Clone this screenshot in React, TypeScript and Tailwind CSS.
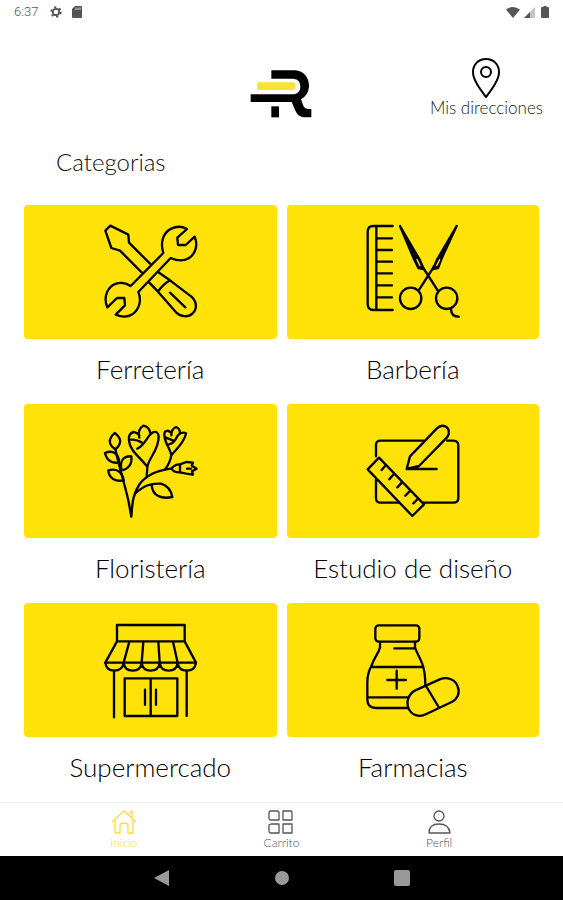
import type { ReactNode } from "react";

const categories: { name: string; viewBox: string; icon: ReactNode }[] = [
  {
    name: "Ferretería",
    viewBox: "0 6 360 360",
    icon: (
      <>
        {/* screwdriver */}
        <path d="M180 161 L117 98 L115 74 L61 47 L46 62 L64 114 L90 122 L155 187" />
        <path d="M205 187 L240 211 L304 260 C322 276 321 298 308 310 C294 323 273 321 258 307 L204 245 L177 217 M240 211 Q218 224 204 245 M240 248 L286 292" />
        {/* wrench */}
        <path d="M122 228 L220 129 C210 98 219 68 244 56 C260 48 278 50 291 57 L262 83 L264 105 L287 105 L314 80 C325 105 316 133 296 145 C279 155 258 151 242 144 L145 246 C156 273 147 299 127 313 C112 323 91 320 77 314 L105 286 L103 264 L81 264 L52 292 C41 267 48 239 69 225 C86 215 107 218 122 228 Z" />
      </>
    ),
  },
  {
    name: "Barbería",
    viewBox: "9 6 360 360",
    icon: (
      <>
        <path d="M128 48 H70 Q53 48 53 66 V282 Q53 300 70 300 H128 M79 48 V300 M79 85 H126 M79 120 H126 M79 155 H126 M79 190 H126 M79 226 H126 M79 262 H126" />
        {/* scissor blades, each with a thin slit */}
        <path d="M150 48 L209 149 L221 177 L205 174 L190 143 Z M320 48 L276 143 L264 174 L249 177 L261 149 Z" fill="currentColor" />
        <path d="M201 149 L210 167 M269 149 L260 167" stroke="#ffe207" strokeWidth="4" />
        <path d="M216 168 L263 241 M253 168 L206 241" />
        <circle cx="182" cy="265" r="32" />
        <circle cx="290" cy="265" r="32" />
        <path d="M303 298 Q304 320 326 320" />
      </>
    ),
  },
  {
    name: "Floristería",
    viewBox: "0 3 360 360",
    icon: (
      <>
        {/* leafy twig */}
        <path d="M76 117 C88 175 104 220 116 276 L124 320 C127 280 128 252 149 222 C170 194 204 181 244 176" />
        <path d="M74 69 C54 87 55 105 76 118 C96 102 95 84 74 69 Z M87 157 C72 161 51 156 45 129 C70 118 87 133 87 157 Z M95 181 C87 153 101 137 124 139 C127 162 115 178 95 181 Z M101 211 C76 216 57 205 55 181 C80 174 97 185 101 211 Z" />
        {/* large tulip */}
        <path d="M172 171 C157 147 119 124 117 92 C115 79 120 69 131 66 Q141 67 148 76 M172 171 C176 143 208 119 206 78 C204 68 199 63 189 67 C171 77 168 103 142 116 M123 89 Q139 87 158 99 M148 83 C144 67 148 54 160 47 Q178 50 181 70 M172 171 L170 202" />
        {/* small tulip */}
        <path d="M244 136 C241 114 222 99 223 71 C225 60 235 60 243 68 M244 136 C259 117 283 98 288 70 C279 65 267 69 261 80 C255 94 250 100 237 103 M228 83 L250 92 M244 76 Q244 57 258 51 Q269 55 270 68 M244 136 Q240 159 225 178" />
        {/* bud and lower leaf */}
        <path d="M244 176 Q255 162 270 163 L289 156 L309 158 L305 167 L320 176 L306 184 L309 194 L289 191 L270 187 Q252 188 244 176 M270 163 V187 M303 176 H291 M135 251 C161 228 180 219 213 221 C230 226 243 241 247 261 C216 268 188 259 185 226" />
      </>
    ),
  },
  {
    name: "Estudio de diseño",
    viewBox: "9 3 360 360",
    icon: (
      <>
        <path d="M78 139 V105 Q78 92 92 92 H221 M292 92 H310 Q325 92 325 107 V264 Q325 278 310 278 H220 M147 278 H91 Q78 278 78 264 V208" />
        <path d="M170 177 L180 139 L260 56 Q272 43 286 49 Q299 56 296 73 L291 82 L207 168 Z M170 177 H260" />
        <path d="M53 178 L87 143 L222 283 L187 318 Z M107 166 L95 180 M132 192 L118 208 M156 217 L142 232 M181 242 L166 257 M203 267 L190 280" />
      </>
    ),
  },
  {
    name: "Supermercado",
    viewBox: "0 0 360 360",
    icon: (
      <>
        <path d="M81 45 H284 V94 H81 Z M81 94 L46 158 H318 L284 94 M118 95 L101 158 M160 95 L155 158 M205 95 L209 158 M249 95 L263 158" />
        <path d="M46 158 Q49 182 73 182 Q97 182 101 158 Q104 182 128 182 Q152 182 155 158 Q158 182 182 182 Q206 182 209 158 Q212 182 236 182 Q260 182 263 158 Q266 182 290 182 Q315 182 318 158" />
        <path d="M72 182 V322 M290 182 V318 M104 205 H262 V318 H104 Z M182 205 V318 M165 239 V284 M198 239 V284" />
      </>
    ),
  },
  {
    name: "Farmacias",
    viewBox: "9 0 360 360",
    icon: (
      <>
        <rect x="76" y="46" width="132" height="49" rx="10" />
        <path d="M90 96 V113 C85 131 72 143 65 166 Q52 191 52 216 V268 Q52 294 78 294 H173 M195 96 V112 C201 132 211 142 219 168 Q226 191 226 228 M194 115 H133 M64 171 H220 M53 262 H174 M112 210 H168 M140 182 V236" />
        <path d="M196 241 L269 208 C293 199 316 209 323 229 C331 249 322 268 305 276 L229 312 C207 324 184 315 176 296 C167 275 176 251 196 241 Z M228 228 L267 293" />
      </>
    ),
  },
];

const tabs = [
  {
    name: "Inicio",
    color: "text-[#f9dd3a]",
    icon: <path d="M1 13 L13 2 L25 13 M4 11 V24 H9 V17 Q9 14 13 14 Q17 14 17 17 V24 H22 V11 M18 5 L21 2 V9" />,
  },
  {
    name: "Carrito",
    color: "text-[#555]",
    icon: <path d="M3 2 H9 Q11 2 11 4 V11 H3 Q1 11 1 9 V4 Q1 2 3 2 Z M15 2 H23 Q24 2 24 3 V11 H15 Z M3 15 H11 V24 H3 Q1 24 1 22 V16 Z M15 15 H24 V24 H15 Z" />,
  },
  {
    name: "Perfil",
    color: "text-[#555]",
    icon: (
      <>
        <circle cx="13" cy="7" r="5" />
        <path d="M3 24 Q3 15 13 15 Q23 15 24 24 Z" />
      </>
    ),
  },
];

function StatusBar() {
  return (
    <div className="flex h-6 items-center justify-between px-3.5 text-[#555]">
      <div className="flex items-center gap-3">
        <span className="font-[Roboto,sans-serif] text-[13px]">6:37</span>
        <svg viewBox="0 0 12 12" className="size-3" fill="none" stroke="currentColor">
          <circle cx="6" cy="6" r="3.2" strokeWidth="1.8" />
          <circle cx="6" cy="6" r="4.8" strokeWidth="1.8" strokeDasharray="2.2 2.83" />
        </svg>
        <svg viewBox="0 0 10 12" className="-ml-0.5 h-3 w-2.5" fill="currentColor">
          <path d="M3 0 H9 Q10 0 10 1 V11 Q10 12 9 12 H1 Q0 12 0 11 V3 Z" />
          <path d="M4 1.5 V4 M6 1.5 V4 M8 1.5 V4" stroke="white" strokeWidth="0.7" />
        </svg>
      </div>
      <div className="flex items-center gap-1">
        <svg viewBox="0 0 14 11" className="h-[11px] w-3.5" fill="currentColor">
          <path d="M7 11 L0 2.5 Q7 -2.5 14 2.5 Z" />
        </svg>
        <svg viewBox="0 0 11 11" className="size-[11px]">
          <path d="M11 0 V11 H0 Z" fill="#c4c4c4" />
          <path d="M6 5 V11 H0 Z" fill="#555" />
        </svg>
        <svg viewBox="0 0 8 12" className="ml-0.5 h-3 w-2" fill="currentColor">
          <path d="M2.5 0 H5.5 V1 H7 Q8 1 8 2 V11 Q8 12 7 12 H1 Q0 12 0 11 V2 Q0 1 1 1 H2.5 Z" />
        </svg>
      </div>
    </div>
  );
}

export default function App() {
  return (
    <div className="flex min-h-screen flex-col bg-white font-[Lato,sans-serif] font-light text-black">
      <StatusBar />

      <header className="grid grid-cols-3 items-start px-5 pt-[34px]">
        <svg viewBox="34 210 184 144" className="col-start-2 mt-3 h-12 w-[62px] justify-self-center" role="img" aria-label="R">
          <path
            d="M97 211 H168 C196 213 211 235 210 260 Q208 285 186 298 L193 317 Q197 326 206 327 H217 V352 H194 Q177 350 170 334 L158 306 H35 V283 H160 C177 282 184 273 184 260 Q184 237 163 236 H97 Z"
            fill="black"
          />
          <path d="M97 319 H120 V352 H97 Z" fill="black" />
          <path d="M55 247 H162 Q169 247 169 254 V264 Q169 270 162 270 H55 Z" fill="#fbe03a" />
        </svg>
        <button className="flex flex-col items-center justify-self-end">
          <svg viewBox="0 0 28 40" className="h-10 w-7" fill="none" stroke="black" strokeWidth="2" strokeLinejoin="round">
            <path d="M14 1 C6 1 1 7 1 14 C1 22 8 31 14 39 C20 31 27 22 27 14 C27 7 22 1 14 1 Z" />
            <circle cx="14" cy="14" r="5" />
          </svg>
          <span className="text-[17px] leading-5 whitespace-nowrap text-[#222]">Mis direcciones</span>
        </button>
      </header>

      <main className="px-6">
        <h1 className="pt-7 pl-8 text-2xl leading-8 text-[#111]">Categorias</h1>
        <div className="mt-[27px] grid grid-cols-2 gap-x-2.5">
          {categories.map(({ name, viewBox, icon }) => (
            <button key={name} className="flex flex-col text-center">
              <span className="flex h-[134px] w-full items-center justify-center rounded-sm bg-[#ffe207]">
                <svg
                  viewBox={viewBox}
                  className="size-[120px]"
                  fill="none"
                  stroke="currentColor"
                  strokeWidth="7"
                  strokeLinecap="round"
                  strokeLinejoin="round"
                >
                  {icon}
                </svg>
              </span>
              <span className="w-full pt-3 pb-[17px] text-[26px] leading-9">{name}</span>
            </button>
          ))}
        </div>
      </main>

      <footer className="mt-auto">
        <nav className="grid h-[54px] grid-cols-3 border-t border-[#eee] px-[45px]">
          {tabs.map(({ name, color, icon }) => (
            <button key={name} className={`flex flex-col items-center pt-1.5 ${color}`}>
              <svg viewBox="0 0 26 26" className="size-[26px]" fill="none" stroke="currentColor" strokeWidth="1.3" strokeLinejoin="round">
                {icon}
              </svg>
              <span className="text-xs leading-4">{name}</span>
            </button>
          ))}
        </nav>
        <div className="flex h-11 items-center justify-center gap-[105px] bg-black text-[#999]">
          <button aria-label="Atrás">
            <svg viewBox="0 0 16 16" className="size-4" fill="currentColor">
              <path d="M0 8 L15 0 V16 Z" />
            </svg>
          </button>
          <button aria-label="Pantalla de inicio" className="size-3.5 rounded-full bg-[#999]" />
          <button aria-label="Recientes" className="size-4 rounded-xs bg-[#999]" />
        </div>
      </footer>
    </div>
  );
}
